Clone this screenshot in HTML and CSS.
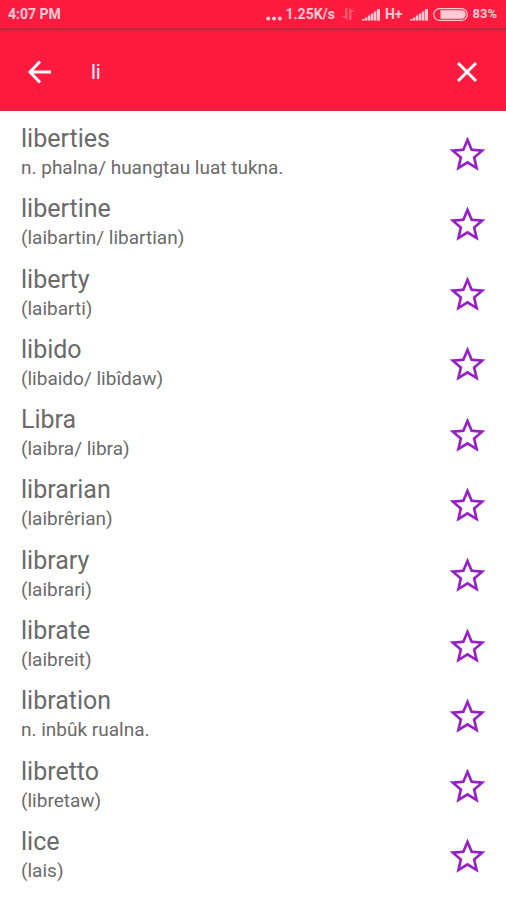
FILE: index.html
```html
<!DOCTYPE html>
<html lang="en">
<head>
<meta charset="utf-8">
<meta name="viewport" content="width=device-width, initial-scale=1">
<title>Dictionary search</title>
<link rel="stylesheet" href="styles.css">
</head>
<body>
<svg class="defs" aria-hidden="true">
  <symbol id="star" viewBox="0 0 24 24"><path d="M22 9.240l-7.190-.620L12 2 9.190 8.630 2 9.240l5.460 4.730L5.820 21 12 17.270 18.180 21l-1.640-7.030zM12 15.550L8.050 17.950 9.100 13.450 5.600 10.400 10.200 10 12 5.750 13.800 10 18.400 10.400 14.900 13.450 15.950 17.950z"/></symbol>
  <symbol id="signal" viewBox="0 0 18 13"><path d="M0 12.500L18 0.500V12.500Z" opacity=".45"/><path d="M0 11h2v1.500H0zM3 9.500h2v3H3zM6 7.500h2v5H6zM9 5.500h2v7H9zM12 3.500h2v9H12zM15 1h3v11.500H15z"/></symbol>
</svg>
<div class="status">
  <span class="time">4:07 PM</span>
  <svg class="dots" viewBox="0 0 16 5" aria-hidden="true"><circle cx="2.200" cy="2.500" r="2"/><circle cx="8" cy="2.500" r="2"/><circle cx="13.800" cy="2.500" r="2"/></svg>
  <span class="speed">1.25K/s</span>
  <svg class="traffic" viewBox="0 0 13 12" aria-hidden="true"><path d="M3 0h2.500v12L0 8h3zM7 12h2.500V4H13L7 0z"/></svg>
  <svg class="signal" aria-hidden="true"><use href="#signal"/></svg>
  <span class="network">H+</span>
  <svg class="signal" aria-hidden="true"><use href="#signal"/></svg>
  <svg class="battery" viewBox="0 0 35 13" aria-hidden="true"><rect x=".7" y=".7" width="33.600" height="11.600" rx="5.800" fill="none" stroke="#ffccd4" stroke-width="1.200"/><path d="M7.500 2.300h21a4.200 4.200 0 0 1 0 8.400h-21z"/></svg>
  <span class="charge">83%</span>
</div>
<header class="toolbar">
  <button class="icon-button" type="button" aria-label="Back"><svg viewBox="0 0 24 24"><path d="M13 1.500L3 12L13 22.500M3 12H24"/></svg></button>
  <input class="search" type="text" value="li" aria-label="Search words">
  <button class="icon-button" type="button" aria-label="Clear"><svg viewBox="0 0 24 24"><path d="M3 3L21 21M21 3L3 21"/></svg></button>
</header>
<main>
<ul class="results">
  <li class="entry"><div class="text"><h2>liberties</h2><p>n. phalna/ huangtau luat tukna.</p></div><button class="favorite" type="button" aria-label="Favorite liberties"><svg><use href="#star"/></svg></button></li>
  <li class="entry"><div class="text"><h2>libertine</h2><p>(laibartin/ libartian)</p></div><button class="favorite" type="button" aria-label="Favorite libertine"><svg><use href="#star"/></svg></button></li>
  <li class="entry"><div class="text"><h2>liberty</h2><p>(laibarti)</p></div><button class="favorite" type="button" aria-label="Favorite liberty"><svg><use href="#star"/></svg></button></li>
  <li class="entry"><div class="text"><h2>libido</h2><p>(libaido/ libîdaw)</p></div><button class="favorite" type="button" aria-label="Favorite libido"><svg><use href="#star"/></svg></button></li>
  <li class="entry"><div class="text"><h2>Libra</h2><p>(laibra/ libra)</p></div><button class="favorite" type="button" aria-label="Favorite Libra"><svg><use href="#star"/></svg></button></li>
  <li class="entry"><div class="text"><h2>librarian</h2><p>(laibrêrian)</p></div><button class="favorite" type="button" aria-label="Favorite librarian"><svg><use href="#star"/></svg></button></li>
  <li class="entry"><div class="text"><h2>library</h2><p>(laibrari)</p></div><button class="favorite" type="button" aria-label="Favorite library"><svg><use href="#star"/></svg></button></li>
  <li class="entry"><div class="text"><h2>librate</h2><p>(laibreit)</p></div><button class="favorite" type="button" aria-label="Favorite librate"><svg><use href="#star"/></svg></button></li>
  <li class="entry"><div class="text"><h2>libration</h2><p>n. inbûk rualna.</p></div><button class="favorite" type="button" aria-label="Favorite libration"><svg><use href="#star"/></svg></button></li>
  <li class="entry"><div class="text"><h2>libretto</h2><p>(libretaw)</p></div><button class="favorite" type="button" aria-label="Favorite libretto"><svg><use href="#star"/></svg></button></li>
  <li class="entry"><div class="text"><h2>lice</h2><p>(lais)</p></div><button class="favorite" type="button" aria-label="Favorite lice"><svg><use href="#star"/></svg></button></li>
</ul>
</main>
</body>
</html>
```
FILE: styles.css
```css
* {
  box-sizing: border-box;
}

body {
  margin: 0;
  min-height: 100vh;
  display: flex;
  flex-direction: column;
  background: #fff;
  color: #6a6a6a;
  font-family: Roboto, sans-serif;
}

button,
input {
  margin: 0;
  padding: 0;
  border: 0;
  background: none;
  font: inherit;
  color: inherit;
}

svg {
  display: block;
  flex: none;
}

.defs {
  position: absolute;
  width: 0;
  height: 0;
}

.status {
  display: flex;
  align-items: center;
  height: 28px;
  padding: 0 9px 0 8px;
  background: #ff1a3f;
  color: #ffccd4;
  fill: #ffccd4;
  font-size: 14px;
  font-weight: 700;
  line-height: 28px;
}

.time {
  margin-right: auto;
}

.dots {
  width: 16px;
  height: 5px;
  margin: 8px 4px 0 0;
}

.traffic {
  width: 13px;
  height: 12px;
  margin: 0 7px;
  opacity: 0.35;
}

.signal {
  width: 18px;
  height: 13px;
}

.network {
  margin: 0 8px 0 5px;
}

.battery {
  width: 35px;
  height: 13px;
  margin: 0 4px 0 5px;
}

.charge {
  font-size: 13px;
}

.toolbar {
  display: flex;
  align-items: center;
  height: 83px;
  padding: 5px 27px 0;
  border-bottom: 1px solid #e62942;
  background: linear-gradient(#a82a3c, #ff1a3f 4px);
  color: #fff;
}

.icon-button svg {
  width: 24px;
  height: 24px;
  fill: none;
  stroke: currentColor;
  stroke-width: 3;
}

.search {
  flex: 1;
  min-width: 0;
  margin: 0 24px 0 40px;
  font-size: 20px;
  line-height: 24px;
  outline: none;
}

main {
  flex: 1;
  display: flex;
}

.results {
  flex: 1;
  display: grid;
  grid-auto-rows: 1fr;
  margin: 0;
  padding: 8px 17px 8px 21px;
  list-style: none;
}

.entry {
  display: flex;
  align-items: center;
  justify-content: space-between;
}

.text {
  min-width: 0;
  padding-bottom: 4px;
}

h2,
p {
  margin: 0;
  font-weight: 400;
}

h2 {
  font-size: 25px;
  line-height: 32px;
}

p {
  font-size: 19px;
  line-height: 26px;
}

.favorite svg {
  width: 43px;
  height: 43px;
  fill: #961fc8;
}
```
